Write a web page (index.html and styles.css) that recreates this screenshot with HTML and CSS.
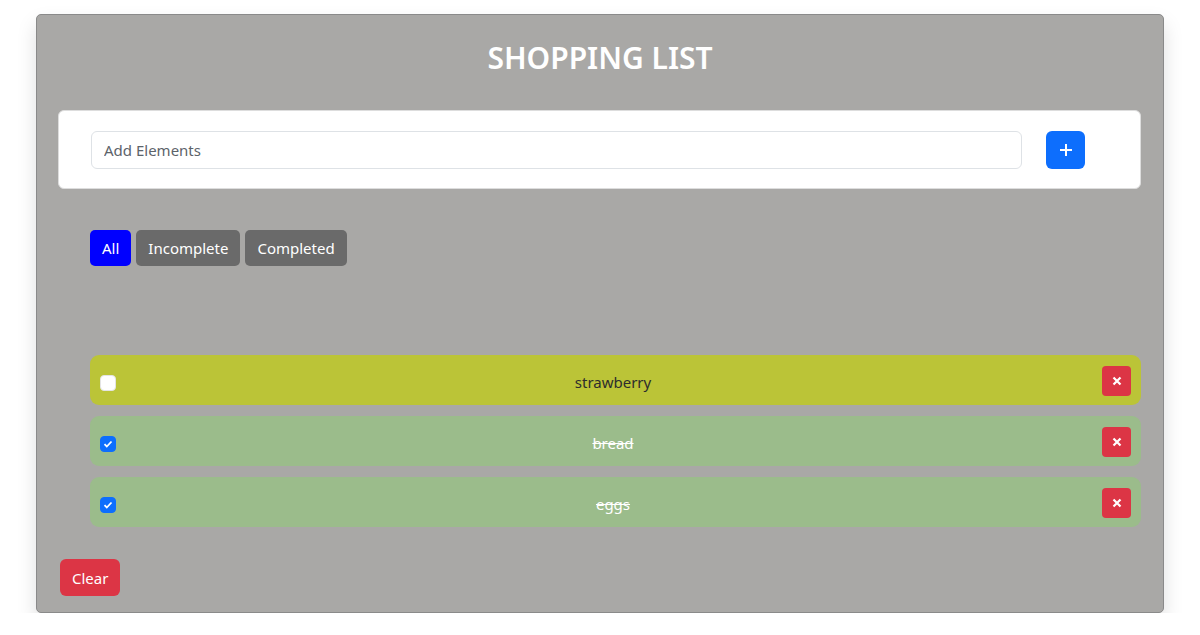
FILE: index.html
```html
<!DOCTYPE html>
<html>
<head>
    <meta charset="utf-8">
    <title>Shopping List</title>
    <link rel="stylesheet" href="styles.css">
</head>
<body>
    <div class="container">
        <h1>SHOPPING LIST</h1>
        <div class="add-card">
            <input type="text" class="add-input" placeholder="Add Elements">
            <button class="add-btn">
                <svg width="16" height="16" viewBox="0 0 16 16"><path d="M8 2v12M2 8h12" stroke="#fff" stroke-width="2" fill="none"/></svg>
            </button>
        </div>
        <div class="filters">
            <button class="filter active">All</button>
            <button class="filter">Incomplete</button>
            <button class="filter">Completed</button>
        </div>
        <ul class="list">
            <li class="item">
                <span class="check"></span>
                <span class="name">strawberry</span>
                <button class="del"><svg width="10" height="10" viewBox="0 0 10 10"><path d="M1.5 1.5l7 7M8.5 1.5l-7 7" stroke="#fff" stroke-width="2.2" fill="none"/></svg></button>
            </li>
            <li class="item done">
                <span class="check checked"><svg width="10" height="10" viewBox="0 0 10 10"><path d="M1.5 5.2l2.3 2.3 4.7-5" stroke="#fff" stroke-width="1.8" fill="none"/></svg></span>
                <span class="name">bread</span>
                <button class="del"><svg width="10" height="10" viewBox="0 0 10 10"><path d="M1.5 1.5l7 7M8.5 1.5l-7 7" stroke="#fff" stroke-width="2.2" fill="none"/></svg></button>
            </li>
            <li class="item done">
                <span class="check checked"><svg width="10" height="10" viewBox="0 0 10 10"><path d="M1.5 5.2l2.3 2.3 4.7-5" stroke="#fff" stroke-width="1.8" fill="none"/></svg></span>
                <span class="name">eggs</span>
                <button class="del"><svg width="10" height="10" viewBox="0 0 10 10"><path d="M1.5 1.5l7 7M8.5 1.5l-7 7" stroke="#fff" stroke-width="2.2" fill="none"/></svg></button>
            </li>
        </ul>
        <button class="clear">Clear</button>
    </div>
</body>
</html>
```

FILE: styles.css
```css
body {
    margin: 0;
    background-color: #fff;
    font-family: "Noto Sans", "Open Sans", sans-serif;
}
.container {
    width: 1126px;
    margin: 14px 0 0 36px;
    border: 1px solid #8a8a8a;
    border-radius: 5px;
    background-color: #a9a8a6;
    box-shadow: 0 10px 20px rgba(0, 0, 0, 0.13);
    padding: 0 0 16px 0;
}
h1 {
    margin: 0;
    padding: 23px 0 0 0;
    height: 72px;
    text-align: center;
    color: #fff;
    font-size: 30px;
    font-weight: 600;
    line-height: 40px;
}
.add-card {
    display: flex;
    align-items: center;
    gap: 24px;
    margin: 0 22px 0 21px;
    padding: 20px 55px 19px 32px;
    background-color: #fff;
    border: 1px solid #ddd;
    border-radius: 6px;
}
.add-input {
    flex: 1;
    height: 38px;
    box-sizing: border-box;
    padding: 6px 12px;
    border: 1px solid #dee2e6;
    border-radius: 6px;
    font: 15px "Noto Sans", "Open Sans", sans-serif;
    color: #212529;
}
.add-input::placeholder {
    color: #5c636a;
}
.add-btn {
    width: 39px;
    height: 38px;
    border: none;
    border-radius: 6px;
    background-color: #0d6efd;
    display: flex;
    align-items: center;
    justify-content: center;
    padding: 0;
}
.filters {
    display: flex;
    gap: 5px;
    margin: 41px 0 0 53px;
}
.filter {
    height: 36px;
    padding: 0 12px;
    border: none;
    border-radius: 5px;
    background-color: #6a6a6a;
    color: #fff;
    font: 15px "Noto Sans", "Open Sans", sans-serif;
}
.filter.active {
    background-color: #0000ff;
}
.list {
    list-style: none;
    margin: 89px 22px 0 53px;
    padding: 0;
    display: flex;
    flex-direction: column;
    gap: 11px;
}
.item {
    display: flex;
    align-items: center;
    height: 50px;
    padding: 0 10px;
    border-radius: 9px;
    background-color: #bbc437;
    font-size: 15px;
    line-height: 20px;
    color: #2d2d2d;
}
.item.done {
    background-color: #9bbc8b;
    color: #fff;
}
.item.done .name {
    text-decoration: line-through;
}
.check {
    width: 16px;
    height: 16px;
    margin-top: 6px;
    box-sizing: border-box;
    border-radius: 4px;
    background-color: #fff;
    border: 1px solid #e4e4e4;
    display: flex;
    align-items: center;
    justify-content: center;
}
.check.checked {
    background-color: #0d6efd;
    border-color: #0d6efd;
}
.name {
    flex: 1;
    text-align: center;
    padding: 3px 0 0 8px;
}
.del {
    width: 29px;
    height: 30px;
    padding: 0;
    margin-top: 2px;
    border: none;
    border-radius: 4px;
    background-color: #dc3545;
    display: flex;
    align-items: center;
    justify-content: center;
}
.clear {
    margin: 32px 0 0 23px;
    height: 37px;
    padding: 0 12px;
    border: none;
    border-radius: 6px;
    background-color: #dc3545;
    color: #fff;
    font: 15px "Noto Sans", "Open Sans", sans-serif;
}
```
